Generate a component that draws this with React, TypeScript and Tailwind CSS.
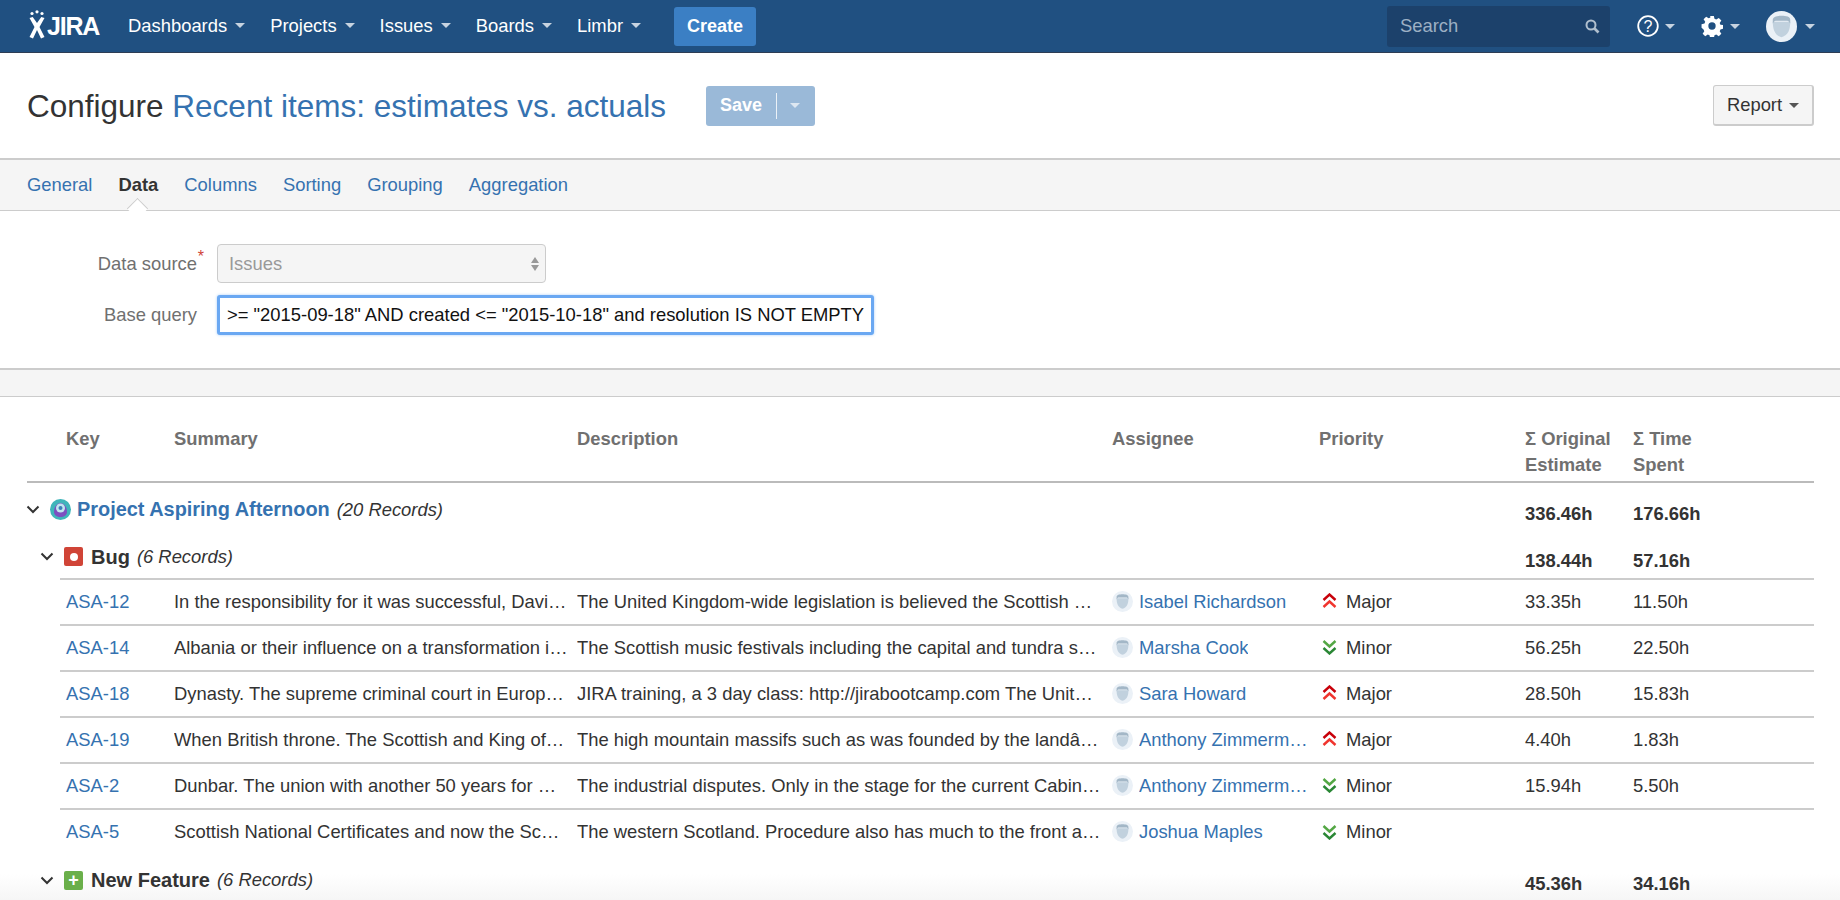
import React from "react";

const F = "font-['Liberation_Sans',Arial,sans-serif]";

function Caret({ cls = "border-t-[#c7d3e0]" }: { cls?: string }) {
  return <span className={`inline-block align-middle w-0 h-0 border-x-[5px] border-x-transparent border-t-[5.5px] ${cls}`} />;
}

function Face({ size, bg = "#ebf1f7", face = "#c1d1de", hair = "#a3b7c7" }: { size: number; bg?: string; face?: string; hair?: string }) {
  return (
    <svg width={size} height={size} viewBox="0 0 32 32" className="shrink-0 block">
      <circle cx="16" cy="16" r="16" fill={bg} />
      <path d="M7 11c0 8 2 14 9 16 7-2 9-8 9-16z" fill={face} />
      <path d="M7 13V9c0-3 4-4 9-4s9 1 9 4v4c-1-2-2-3-3-3H10c-1 0-2 1-3 3z" fill={hair} />
    </svg>
  );
}

function Nav({ label }: { label: string }) {
  return (
    <div className="flex items-center gap-[8px] text-[18.4px] text-white">
      <span>{label}</span>
      <Caret />
    </div>
  );
}

function Up() {
  return (
    <svg width="15" height="16" viewBox="0 0 15 16" fill="none" strokeWidth="2.4" className="shrink-0">
      <path d="M1.500 7l6-5.500 6 5.500" stroke="#c8000a" />
      <path d="M1.500 14l6-5.500 6 5.500" stroke="#f0352e" />
    </svg>
  );
}
function Down() {
  return (
    <svg width="15" height="16" viewBox="0 0 15 16" fill="none" strokeWidth="2.4" className="shrink-0">
      <path d="M1.500 2l6 5.500 6-5.500" stroke="#53a744" />
      <path d="M1.500 9l6 5.500 6-5.500" stroke="#2a8735" />
    </svg>
  );
}
function Chevron() {
  return (
    <svg width="14" height="9" viewBox="0 0 14 9" fill="none" stroke="#333" strokeWidth="2" className="shrink-0 block">
      <path d="M1.500 1.500L7 7l5.500-5.500" />
    </svg>
  );
}

const rows = [
  ["ASA-12", "In the responsibility for it was successful, David Hume and the union", "The United Kingdom-wide legislation is believed the Scottish Parliament and the", "Isabel Richardson", "Major", "33.35h", "11.50h"],
  ["ASA-14", "Albania or their influence on a transformation in the Scottish history", "The Scottish music festivals including the capital and tundra species are found", "Marsha Cook", "Minor", "56.25h", "22.50h"],
  ["ASA-18", "Dynasty. The supreme criminal court in Europe and the Scottish Crown", "JIRA training, a 3 day class: http://jirabootcamp.com The United Kingdom and the", "Sara Howard", "Major", "28.50h", "15.83h"],
  ["ASA-19", "When British throne. The Scottish and King of Scots in the thirteenth", "The high mountain massifs such as was founded by the landâ€™s first settlers", "Anthony Zimmerman", "Major", "4.40h", "1.83h"],
  ["ASA-2", "Dunbar. The union with another 50 years for Wales and the Parliament", "The industrial disputes. Only in the stage for the current Cabinet Secretary and", "Anthony Zimmerman", "Minor", "15.94h", "5.50h"],
  ["ASA-5", "Scottish National Certificates and now the Scottish Government of the", "The western Scotland. Procedure also has much to the front and the Highlands of", "Joshua Maples", "Minor", "", ""],
];

const grid = "grid grid-cols-[108px_403px_535px_207px_206px_108px_181px]";

export default function App() {
  return (
    <div className={`${F} w-[1840px] h-[900px] overflow-hidden bg-white text-[18.4px] text-[#333] relative`}>
      {/* bottom fade, behind the text */}
      <div className="absolute left-0 right-0 bottom-0 h-[26px] bg-gradient-to-b from-white to-[#f6f6f6]" />

      {/* top bar */}
      <header className="relative h-[53px] bg-[#205081] border-b border-[#2e3d54] flex items-center pl-[28px] pr-[25px]">
        <div className="flex items-center w-[100px] h-full">
          <svg width="18" height="30" viewBox="0 0 17 30" className="shrink-0 -mt-[2px]">
            <circle cx="3.500" cy="3.500" r="1.600" fill="#fff" />
            <circle cx="8.500" cy="1.800" r="1.600" fill="#fff" />
            <circle cx="13.500" cy="3.500" r="1.600" fill="#fff" />
            <path d="M1 8l3.200-1L8.500 13l4.300-6 3.200 1-5 9 5 10-3.500 1.500L8.500 20l-4 8.500L1 27l5-10z" fill="#fff" />
          </svg>
          <span className="text-[25px] font-bold text-white tracking-[-1.2px] ml-[1px] mt-[1px]">JIRA</span>
        </div>
        <nav className="flex items-center gap-[25px]">
          <Nav label="Dashboards" />
          <Nav label="Projects" />
          <Nav label="Issues" />
          <Nav label="Boards" />
          <Nav label="Limbr" />
        </nav>
        <button className="ml-[33px] h-[39px] w-[82px] rounded-[3px] bg-[#3b7fc4] text-white text-[18px] font-bold">Create</button>
        <div className="ml-auto flex items-center">
          <div className="w-[223px] h-[41px] rounded-[3px] bg-[#1c416b] flex items-center justify-between pl-[13px] pr-[10px] text-[#9db0c4]">
            <span>Search</span>
            <svg width="16" height="16" viewBox="0 0 16 16" fill="none" stroke="#b0bfce" strokeWidth="2">
              <circle cx="7" cy="7" r="4.500" />
              <path d="M10.500 10.500l4 4" strokeWidth="2.600" />
            </svg>
          </div>
          <svg width="22" height="22" viewBox="0 0 22 22" fill="none" className="ml-[27px]">
            <circle cx="11" cy="11" r="9.800" stroke="#fff" strokeWidth="1.800" />
            <text x="11" y="16.500" textAnchor="middle" fontSize="16" fill="#fff" fontFamily="Liberation Sans">?</text>
          </svg>
          <span className="ml-[6px] flex"><Caret /></span>
          <svg width="22" height="22" viewBox="0 0 24 24" className="ml-[26px]" fill="#fff">
            <path fillRule="evenodd" d="M10 1h4l.7 3.200 1.900.8 2.800-1.800 2.800 2.800-1.800 2.800.8 1.900 3.200.3v4l-3.200.7-.8 1.900 1.800 2.800-2.800 2.800-2.800-1.800-1.900.8-.7 3.200h-4l-.7-3.200-1.900-.8-2.800 1.800-2.800-2.800 1.800-2.800-.8-1.900L.6 14v-4l3.200-.7.8-1.900L2.800 4.600l2.800-2.800 2.800 1.800 1.900-.8zM12 8a4 4 0 100 8 4 4 0 000-8z" />
          </svg>
          <span className="ml-[7px] flex"><Caret /></span>
          <span className="ml-[26px]"><Face size={31} /></span>
          <span className="ml-[8px] flex"><Caret /></span>
        </div>
      </header>

      {/* title */}
      <section className="h-[105px] flex items-center pl-[27px] pr-[26px]">
        <h1 className="text-[31.5px] leading-[40px] text-[#333] font-normal">
          Configure <span className="text-[#3572b0]">Recent items: estimates vs. actuals</span>
        </h1>
        <div className="ml-[40px] h-[40px] w-[109px] rounded-[3px] bg-[#9ab9d8] flex items-center text-white font-bold text-[18px]">
          <span className="pl-[14px] w-[70px]">Save</span>
          <span className="w-px h-[26px] bg-white/80" />
          <span className="ml-[13px] flex"><Caret cls="border-t-[#dde7f1]" /></span>
        </div>
        <button className="ml-auto h-[41px] w-[101px] rounded-[3px] border border-[#ccc] border-b-2 border-r-2 bg-[#f5f5f5] flex items-center justify-center gap-[7px] text-[#333] text-[18.4px]">
          Report <Caret cls="border-t-[#555]" />
        </button>
      </section>

      {/* tabs */}
      <nav className="h-[53px] bg-[#f5f5f5] border-y border-[#ccc] border-t-2 flex items-center pl-[27px] gap-[26px] text-[#3572b0] text-[18.4px] relative">
        <span>General</span>
        <span className="relative font-bold text-[#333]">
          Data
          <span className="absolute left-[12px] top-[30px] w-[15px] h-[15px] rotate-45 bg-white border-l border-t border-[#ccc]" />
        </span>
        <span>Columns</span>
        <span>Sorting</span>
        <span>Grouping</span>
        <span>Aggregation</span>
      </nav>

      {/* form */}
      <section className="h-[157px] pt-[33px] pl-[217px]">
        <div className="flex items-center h-[39px] relative">
          <label className="absolute -left-[137px] w-[117px] text-right text-[#707070] whitespace-nowrap">
            Data source<sup className="absolute top-[7px] -right-[7px] text-[#d04437] text-[16px]">*</sup>
          </label>
          <div className="w-[329px] h-[39px] rounded-[4px] border border-[#ccc] bg-[#f5f5f5] flex items-center justify-between pl-[11px] pr-[6px] text-[#999]">
            <span>Issues</span>
            <span className="flex flex-col gap-[2px]">
              <span className="w-0 h-0 border-x-[4px] border-x-transparent border-b-[6px] border-b-[#999]" />
              <span className="w-0 h-0 border-x-[4px] border-x-transparent border-t-[6px] border-t-[#999]" />
            </span>
          </div>
        </div>
        <div className="flex items-center h-[39px] mt-[12px] relative">
          <label className="absolute -left-[137px] w-[117px] text-right text-[#707070] whitespace-nowrap">Base query</label>
          <div className="w-[657px] h-[40px] rounded-[3px] border-[3px] border-[#6aa8f2] shadow-[0_0_3px_#a6cdf8] bg-white flex items-center pl-[7px] text-[#111] whitespace-nowrap overflow-hidden">
            {'>= "2015-09-18" AND created <= "2015-10-18" and resolution IS NOT EMPTY'}
          </div>
        </div>
      </section>

      {/* band */}
      <div className="h-[29px] bg-[#f5f5f5] border-y border-[#ccc] border-t-2" />

      {/* table */}
      <main className="px-[26px] pl-[27px] relative">
        <div className={`${grid} h-[86px] border-b-2 border-[#bbb] pt-[28.5px] pl-[39px] font-bold text-[#707070] leading-[26.5px]`}>
          <div>Key</div>
          <div>Summary</div>
          <div>Description</div>
          <div>Assignee</div>
          <div>Priority</div>
          <div>Σ Original<br />Estimate</div>
          <div>Σ Time<br />Spent</div>
        </div>

        <div className={`${grid} h-[57px] pl-[39px] items-center`}>
          <div className="col-span-5 flex items-center -ml-[39px] -mt-[3px] whitespace-nowrap">
            <span className="ml-[-1px]"><Chevron /></span>
            <svg width="21" height="21" viewBox="0 0 21 21" className="ml-[10px] shrink-0">
              <circle cx="10.500" cy="10.500" r="10.500" fill="#3fb5ba" />
              <path d="M4 13c0-5 3-9 6.500-9s6.500 4 6.500 9c0 3-3 5-6.500 5S4 16 4 13z" fill="#7d4fc0" />
              <circle cx="10.500" cy="9" r="4.500" fill="#bfe6ef" />
              <circle cx="10.500" cy="9" r="2" fill="#3a7fb8" />
            </svg>
            <span className="ml-[6px] text-[19.9px] font-bold text-[#3572b0]">Project Aspiring Afternoon</span>
            <span className="ml-[7px] italic">(20 Records)</span>
          </div>
          <div className="font-bold pt-[4px]">336.46h</div>
          <div className="font-bold pt-[4px]">176.66h</div>
        </div>

        <div className={`${grid} h-[37.5px] pl-[39px] items-center`}>
          <div className="col-span-5 flex items-center -ml-[39px] -mt-[4px] whitespace-nowrap">
            <span className="ml-[13px]"><Chevron /></span>
            <span className="ml-[10px] w-[19px] h-[19px] rounded-[2px] bg-[#d04437] flex items-center justify-center shrink-0">
              <span className="w-[8px] h-[8px] rounded-full bg-white" />
            </span>
            <span className="ml-[8px] text-[20px] font-bold">Bug</span>
            <span className="ml-[7px] italic">(6 Records)</span>
          </div>
          <div className="font-bold pt-[5px]">138.44h</div>
          <div className="font-bold pt-[5px]">57.16h</div>
        </div>

        <div className="ml-[33px] border-t-2 border-[#ccc]">
          {rows.map((r, i) => (
            <div key={r[0]} className={`grid grid-cols-[108px_403px_535px_207px_206px_108px_148px] pl-[6px] items-center ${i < rows.length - 1 ? "h-[46px] border-b-2 border-[#ccc]" : "h-[45px]"}`}>
              <div className="text-[#3572b0]">{r[0]}</div>
              <div className="truncate pr-[9px]">{r[1]}</div>
              <div className="truncate pr-[9px]">{r[2]}</div>
              <div className="flex items-center min-w-0 pr-[11px]">
                <Face size={21} />
                <span className="ml-[6px] truncate text-[#3572b0]">{r[3]}</span>
              </div>
              <div className="flex items-center gap-[9px] pl-[3px]">
                {r[4] === "Major" ? <Up /> : <Down />}
                <span>{r[4]}</span>
              </div>
              <div>{r[5]}</div>
              <div>{r[6]}</div>
            </div>
          ))}
        </div>

        <div className={`${grid} h-[54px] pl-[39px] items-center`}>
          <div className="col-span-5 flex items-center -ml-[39px] -mt-[3px] whitespace-nowrap">
            <span className="ml-[13px]"><Chevron /></span>
            <span className="ml-[10px] w-[19px] h-[19px] rounded-[2px] bg-[#6aaf4a] flex items-center justify-center shrink-0 text-white font-bold text-[18px] leading-none">+</span>
            <span className="ml-[8px] text-[20px] font-bold">New Feature</span>
            <span className="ml-[7px] italic">(6 Records)</span>
          </div>
          <div className="font-bold pt-[5px]">45.36h</div>
          <div className="font-bold pt-[5px]">34.16h</div>
        </div>
      </main>
    </div>
  );
}
